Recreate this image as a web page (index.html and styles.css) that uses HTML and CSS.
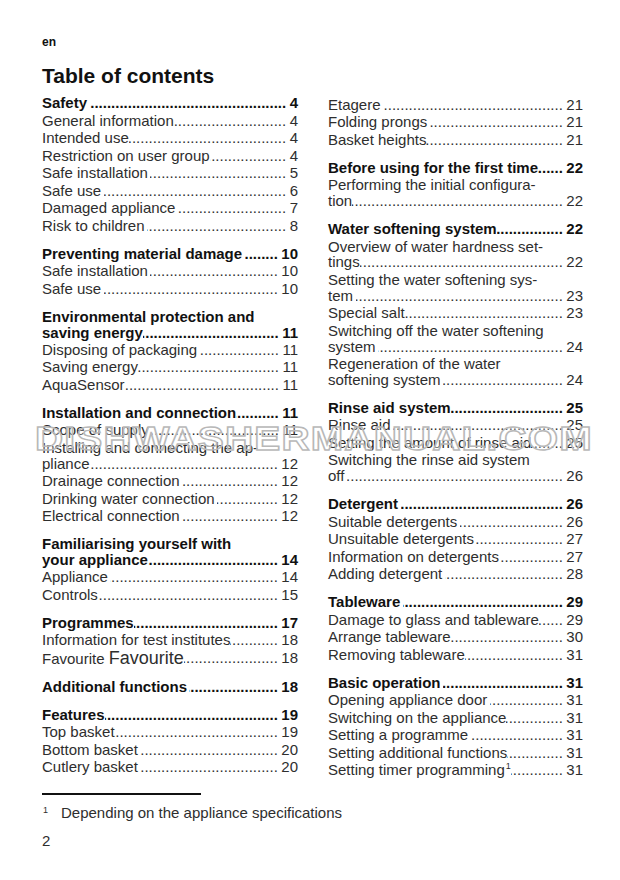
FILE: index.html
```html
<!DOCTYPE html>
<html lang="en">
<head>
<meta charset="utf-8">
<title>Table of contents</title>
<link rel="stylesheet" href="styles.css">
</head>
<body>
<div class="page">
  <div class="lang">en</div>
  <h1 class="title">Table of contents</h1>

  <div class="cols">
    <div class="col">
      <div class="group">
        <div class="item h"><div class="row"><span class="t s">Safety</span><span class="dots"></span><span class="n">4</span></div></div>
        <div class="item"><div class="row"><span class="t">General information</span><span class="dots"></span><span class="n">4</span></div></div>
        <div class="item"><div class="row"><span class="t">Intended use</span><span class="dots"></span><span class="n">4</span></div></div>
        <div class="item"><div class="row"><span class="t">Restriction on user group</span><span class="dots"></span><span class="n">4</span></div></div>
        <div class="item"><div class="row"><span class="t s">Safe installation</span><span class="dots"></span><span class="n">5</span></div></div>
        <div class="item"><div class="row"><span class="t s">Safe use</span><span class="dots"></span><span class="n">6</span></div></div>
        <div class="item"><div class="row"><span class="t s">Damaged appliance</span><span class="dots"></span><span class="n">7</span></div></div>
        <div class="item"><div class="row"><span class="t s">Risk to children</span><span class="dots"></span><span class="n">8</span></div></div>
      </div>

      <div class="group">
        <div class="item h"><div class="row"><span class="t s">Preventing material damage</span><span class="dots"></span><span class="n">10</span></div></div>
        <div class="item"><div class="row"><span class="t s">Safe installation</span><span class="dots"></span><span class="n">10</span></div></div>
        <div class="item"><div class="row"><span class="t s">Safe use</span><span class="dots"></span><span class="n">10</span></div></div>
      </div>

      <div class="group">
        <div class="item h">
          <div class="line">Environmental protection and</div>
          <div class="row"><span class="t">saving energy</span><span class="dots"></span><span class="n">11</span></div>
        </div>
        <div class="item"><div class="row"><span class="t s">Disposing of packaging</span><span class="dots"></span><span class="n">11</span></div></div>
        <div class="item"><div class="row"><span class="t">Saving energy</span><span class="dots"></span><span class="n">11</span></div></div>
        <div class="item"><div class="row"><span class="t">AquaSensor</span><span class="dots"></span><span class="n">11</span></div></div>
      </div>

      <div class="group">
        <div class="item h"><div class="row"><span class="t">Installation and connection</span><span class="dots"></span><span class="n">11</span></div></div>
        <div class="item"><div class="row"><span class="t s">Scope of supply</span><span class="dots"></span><span class="n">11</span></div></div>
        <div class="item">
          <div class="line">Installing and connecting the ap-</div>
          <div class="row"><span class="t">pliance</span><span class="dots"></span><span class="n">12</span></div>
        </div>
        <div class="item"><div class="row"><span class="t s">Drainage connection</span><span class="dots"></span><span class="n">12</span></div></div>
        <div class="item"><div class="row"><span class="t s">Drinking water connection</span><span class="dots"></span><span class="n">12</span></div></div>
        <div class="item"><div class="row"><span class="t s">Electrical connection</span><span class="dots"></span><span class="n">12</span></div></div>
      </div>

      <div class="group">
        <div class="item h">
          <div class="line">Familiarising yourself with</div>
          <div class="row"><span class="t">your appliance</span><span class="dots"></span><span class="n">14</span></div>
        </div>
        <div class="item"><div class="row"><span class="t s">Appliance</span><span class="dots"></span><span class="n">14</span></div></div>
        <div class="item"><div class="row"><span class="t">Controls</span><span class="dots"></span><span class="n">15</span></div></div>
      </div>

      <div class="group">
        <div class="item h"><div class="row"><span class="t">Programmes</span><span class="dots"></span><span class="n">17</span></div></div>
        <div class="item"><div class="row"><span class="t">Information for test institutes</span><span class="dots"></span><span class="n">18</span></div></div>
        <div class="item"><div class="row"><span class="t">Favourite <span class="big">Favourite</span></span><span class="dots"></span><span class="n">18</span></div></div>
      </div>

      <div class="group">
        <div class="item h"><div class="row"><span class="t s">Additional functions</span><span class="dots"></span><span class="n">18</span></div></div>
      </div>

      <div class="group">
        <div class="item h"><div class="row"><span class="t">Features</span><span class="dots"></span><span class="n">19</span></div></div>
        <div class="item"><div class="row"><span class="t">Top basket</span><span class="dots"></span><span class="n">19</span></div></div>
        <div class="item"><div class="row"><span class="t s">Bottom basket</span><span class="dots"></span><span class="n">20</span></div></div>
        <div class="item"><div class="row"><span class="t s">Cutlery basket</span><span class="dots"></span><span class="n">20</span></div></div>
      </div>
    </div>

    <div class="col col-r">
      <div class="group">
        <div class="item"><div class="row"><span class="t s">Etagere</span><span class="dots"></span><span class="n">21</span></div></div>
        <div class="item"><div class="row"><span class="t s">Folding prongs</span><span class="dots"></span><span class="n">21</span></div></div>
        <div class="item"><div class="row"><span class="t">Basket heights</span><span class="dots"></span><span class="n">21</span></div></div>
      </div>

      <div class="group">
        <div class="item h"><div class="row"><span class="t">Before using for the first time</span><span class="dots"></span><span class="n">22</span></div></div>
        <div class="item">
          <div class="line">Performing the initial configura-</div>
          <div class="row"><span class="t">tion</span><span class="dots"></span><span class="n">22</span></div>
        </div>
      </div>

      <div class="group">
        <div class="item h"><div class="row"><span class="t">Water softening system</span><span class="dots"></span><span class="n">22</span></div></div>
        <div class="item">
          <div class="line">Overview of water hardness set-</div>
          <div class="row"><span class="t">tings</span><span class="dots"></span><span class="n">22</span></div>
        </div>
        <div class="item">
          <div class="line">Setting the water softening sys-</div>
          <div class="row"><span class="t s">tem</span><span class="dots"></span><span class="n">23</span></div>
        </div>
        <div class="item"><div class="row"><span class="t">Special salt</span><span class="dots"></span><span class="n">23</span></div></div>
        <div class="item">
          <div class="line">Switching off the water softening</div>
          <div class="row"><span class="t s">system</span><span class="dots"></span><span class="n">24</span></div>
        </div>
        <div class="item">
          <div class="line">Regeneration of the water</div>
          <div class="row"><span class="t s">softening system</span><span class="dots"></span><span class="n">24</span></div>
        </div>
      </div>

      <div class="group">
        <div class="item h"><div class="row"><span class="t">Rinse aid system</span><span class="dots"></span><span class="n">25</span></div></div>
        <div class="item"><div class="row"><span class="t s">Rinse aid</span><span class="dots"></span><span class="n">25</span></div></div>
        <div class="item"><div class="row"><span class="t">Setting the amount of rinse aid</span><span class="dots"></span><span class="n">25</span></div></div>
        <div class="item">
          <div class="line">Switching the rinse aid system</div>
          <div class="row"><span class="t s">off</span><span class="dots"></span><span class="n">26</span></div>
        </div>
      </div>

      <div class="group">
        <div class="item h"><div class="row"><span class="t s">Detergent</span><span class="dots"></span><span class="n">26</span></div></div>
        <div class="item"><div class="row"><span class="t s">Suitable detergents</span><span class="dots"></span><span class="n">26</span></div></div>
        <div class="item"><div class="row"><span class="t s">Unsuitable detergents</span><span class="dots"></span><span class="n">27</span></div></div>
        <div class="item"><div class="row"><span class="t s">Information on detergents</span><span class="dots"></span><span class="n">27</span></div></div>
        <div class="item"><div class="row"><span class="t s">Adding detergent</span><span class="dots"></span><span class="n">28</span></div></div>
      </div>

      <div class="group">
        <div class="item h"><div class="row"><span class="t s">Tableware</span><span class="dots"></span><span class="n">29</span></div></div>
        <div class="item"><div class="row"><span class="t">Damage to glass and tableware</span><span class="dots"></span><span class="n">29</span></div></div>
        <div class="item"><div class="row"><span class="t">Arrange tableware</span><span class="dots"></span><span class="n">30</span></div></div>
        <div class="item"><div class="row"><span class="t">Removing tableware</span><span class="dots"></span><span class="n">31</span></div></div>
      </div>

      <div class="group">
        <div class="item h"><div class="row"><span class="t s">Basic operation</span><span class="dots"></span><span class="n">31</span></div></div>
        <div class="item"><div class="row"><span class="t s">Opening appliance door</span><span class="dots"></span><span class="n">31</span></div></div>
        <div class="item"><div class="row"><span class="t">Switching on the appliance</span><span class="dots"></span><span class="n">31</span></div></div>
        <div class="item"><div class="row"><span class="t s">Setting a programme</span><span class="dots"></span><span class="n">31</span></div></div>
        <div class="item"><div class="row"><span class="t">Setting additional functions</span><span class="dots"></span><span class="n">31</span></div></div>
        <div class="item"><div class="row"><span class="t">Setting timer programming<sup class="sup">1</sup></span><span class="dots"></span><span class="n">31</span></div></div>
      </div>
    </div>
  </div>

  <div class="foot">
    <div class="rule"></div>
    <div class="note"><span class="note-mark">1</span><span class="note-text">Depending on the appliance specifications</span></div>
  </div>
  <div class="pageno">2</div>

  <div class="watermark" aria-hidden="true">DISHWASHERMANUAL.COM</div>
</div>
</body>
</html>
```

FILE: styles.css
```css
html, body {
  margin: 0;
  padding: 0;
  background: #ffffff;
}

body {
  font-family: "Liberation Sans", Arial, Helvetica, sans-serif;
  color: #2e2e2e;
}

.page {
  position: relative;
  width: 620px;
  height: 880px;
  box-sizing: border-box;
  padding: 35px 0 0 42px;
  overflow: hidden;
}

.lang {
  font-size: 12px;
  line-height: 14px;
  font-weight: bold;
  color: #111111;
}

.title {
  margin: 15px 0 0;
  font-size: 21px;
  line-height: 24px;
  font-weight: bold;
  color: #111111;
}

.cols {
  display: grid;
  grid-template-columns: 256px 255px;
  column-gap: 30px;
  align-items: start;
  margin-top: 6.6px;
}

.col-r {
  padding-top: 1.5px;
}

.group + .group {
  margin-top: 10.6px;
}

.col-r .group + .group {
  margin-top: 10.5px;
}

.item {
  padding: 0.75px 0;
  font-size: 15px;
  line-height: 16px;
}

.col-r .item .line {
  line-height: 15.8px;
}

.item.h {
  font-weight: bold;
  color: #111111;
}

.item.h .line,
.item.h .line + .row {
  line-height: 15.6px;
}

.row {
  display: flex;
  align-items: flex-start;
  white-space: nowrap;
}

.t.s {
  margin-right: 2.5px;
}

.dots {
  flex: 1;
  min-width: 0;
  overflow: hidden;
  white-space: nowrap;
  direction: rtl;
  margin: 0 3.5px 0 0;
}

.dots::before {
  content: "..............................................................................................";
}

.n {
  text-align: right;
}

.big {
  font-size: 18px;
}

.sup {
  font-size: 9px;
  line-height: 0;
  vertical-align: 6px;
  margin-left: 1px;
}

.foot {
  margin-top: 14.5px;
}

.rule {
  width: 159px;
  height: 1.5px;
  background: #111111;
}

.note {
  display: flex;
  align-items: flex-start;
  margin-top: 8.7px;
  font-size: 15px;
  line-height: 18px;
}

.note-mark {
  font-size: 9px;
  line-height: 12px;
  width: 18px;
  padding-left: 1px;
}

.pageno {
  margin-top: 10.3px;
  font-size: 15px;
  line-height: 18px;
}

.watermark {
  position: absolute;
  left: 35px;
  top: 422px;
  font-family: "Liberation Sans", Arial, sans-serif;
  font-weight: bold;
  font-size: 33px;
  line-height: 33px;
  letter-spacing: 1px;
  white-space: nowrap;
  color: rgba(255, 255, 255, 0.25);
  -webkit-text-stroke: 1.4px #b8b8b8;
  transform: scaleX(1.18);
  transform-origin: left top;
  pointer-events: none;
}
```
